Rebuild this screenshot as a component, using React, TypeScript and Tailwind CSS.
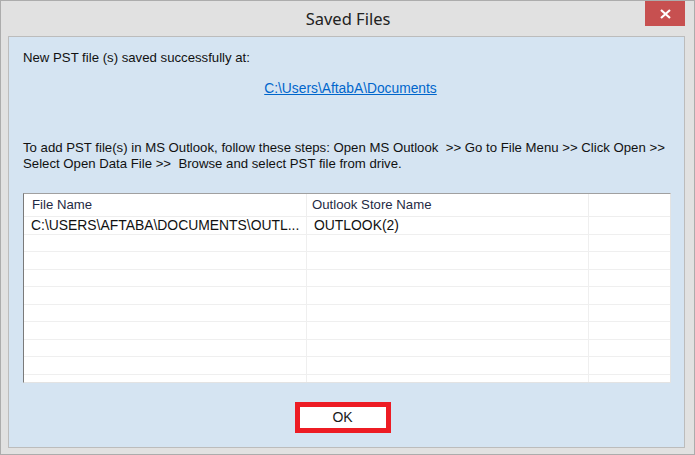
import React from "react";

const rows = Array.from({ length: 10 });

export default function App() {
  return (
    <div className="w-[695px] h-[455px] bg-[#e1e1e1] border border-[#acacac] flex flex-col" style={{ fontFamily: '"Liberation Sans", Arial, sans-serif' }}>
      {/* title bar */}
      <div className="h-[35px] flex items-start pl-[50px] shrink-0">
        <div className="flex-1 text-center pt-[7px] text-[16.5px] leading-[22px] text-[#222]" style={{ fontFamily: '"Noto Sans", sans-serif' }}>
          Saved Files
        </div>
        <div className="w-[40px] h-[25px] mr-[9px] bg-[#c75050] flex items-center justify-center">
          <svg width="11" height="10" viewBox="0 0 11 10">
            <path d="M1 1 L10 9 M10 1 L1 9" stroke="white" strokeWidth="2.2" />
          </svg>
        </div>
      </div>
      {/* panel */}
      <div className="flex-1 ml-[7px] mr-[9px] mb-[6px] bg-[#d5e4f2] border border-[#bcbcbc] flex flex-col px-[14px] text-[13.2px] text-[#111]">
        <div className="mt-[13px] leading-[16px]">New PST file (s) saved successfully at:</div>
        <div className="mt-[15px] leading-[16px] text-center pl-[8px]">
          <span className="text-[#0066cc] underline text-[13.8px]">C:\Users\AftabA\Documents</span>
        </div>
        <div className="mt-[43px] leading-[16px] whitespace-pre">
          {"To add PST file(s) in MS Outlook, follow these steps: Open MS Outlook  >> Go to File Menu >> Click Open >>\nSelect Open Data File >>  Browse and select PST file from drive."}
        </div>
        {/* table */}
        <div className="mt-[21px] w-[648px] h-[190px] bg-white border-t border-l border-t-[#a0a0a0] border-l-[#7a7a7a] border-r border-b border-r-[#e3e3e3] border-b-[#e3e3e3] overflow-hidden">
          <div className="h-[23px] flex border-b border-[#eeeeee] text-[#1f2a44] text-[13.2px]">
            <div className="w-[283px] border-r border-[#eeeeee] pl-[8px] leading-[22px]">File Name</div>
            <div className="w-[282px] border-r border-[#eeeeee] pl-[5px] leading-[22px]">Outlook Store Name</div>
            <div className="flex-1" />
          </div>
          {rows.map((_, i) => (
            <div key={i} className="h-[17.5px] flex border-b border-[#efefef] text-[13.9px]">
              <div className="w-[283px] border-r border-[#efefef] pl-[7px] leading-[17px]">
                {i === 0 ? "C:\\USERS\\AFTABA\\DOCUMENTS\\OUTL..." : ""}
              </div>
              <div className="w-[282px] border-r border-[#efefef] pl-[7px] leading-[17px]">
                {i === 0 ? "OUTLOOK(2)" : ""}
              </div>
              <div className="flex-1" />
            </div>
          ))}
        </div>
        <div className="mt-[19px] flex justify-center">
          <div className="ml-[-8px] w-[96px] h-[31px] border-[5px] border-[#ed1c24] bg-white flex items-center justify-center text-[14px] text-[#1a1a1a]">
            OK
          </div>
        </div>
      </div>
    </div>
  );
}
